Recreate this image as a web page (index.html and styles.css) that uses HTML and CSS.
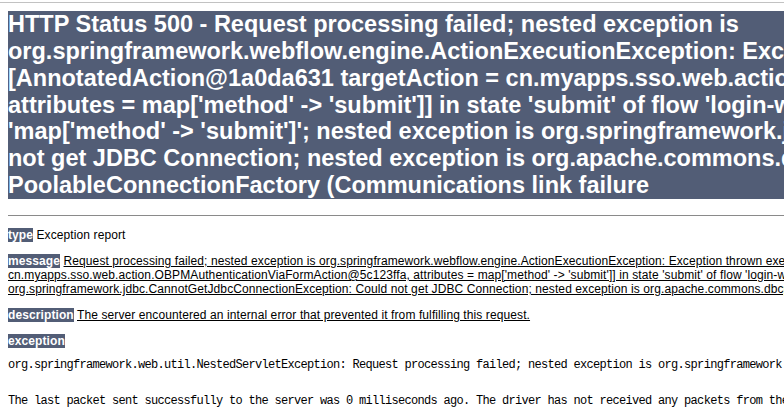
FILE: index.html
```html
<!DOCTYPE html>
<html>
<head>
<meta charset="utf-8">
<title>Apache Tomcat - Error report</title>
<link rel="stylesheet" href="styles.css">
</head>
<body>
<div class="chrome"></div>
<div class="page">
<h1 class="title">HTTP Status 500 - Request processing failed; nested exception is<br>org.springframework.webflow.engine.ActionExecutionException: Exception thrown executing<br>[AnnotatedAction@1a0da631 targetAction = cn.myapps.sso.web.action.OBPMAuthenticationViaFormAction@5c123ffa,<br>attributes = map['method' -&gt; 'submit']] in state 'submit' of flow 'login-webflow' -- action execution attributes were<br>'map['method' -&gt; 'submit']'; nested exception is org.springframework.jdbc.CannotGetJdbcConnectionException: Could<br>not get JDBC Connection; nested exception is org.apache.commons.dbcp.SQLNestedException: Cannot create<br>PoolableConnectionFactory (Communications link failure</h1>
<hr class="rule">
<p class="row"><b class="label">type</b> Exception report</p>
<p class="row"><b class="label">message</b> <u>Request processing failed; nested exception is org.springframework.webflow.engine.ActionExecutionException: Exception thrown executing [AnnotatedAction@1a0da631 targetAction =<br>cn.myapps.sso.web.action.OBPMAuthenticationViaFormAction@5c123ffa, attributes = map['method' -&gt; 'submit']] in state 'submit' of flow 'login-webflow' -- action execution attributes were 'map['method' -&gt; 'submit']'; nested exception is<br>org.springframework.jdbc.CannotGetJdbcConnectionException: Could not get JDBC Connection; nested exception is org.apache.commons.dbcp.SQLNestedException: Cannot create PoolableConnectionFactory (Communications link failure</u></p>
<p class="row"><b class="label">description</b> <u>The server encountered an internal error that prevented it from fulfilling this request.</u></p>
<p class="row row-tight"><b class="label">exception</b></p>
<pre class="trace">org.springframework.web.util.NestedServletException: Request processing failed; nested exception is org.springframework.webflow.engine.ActionExecutionException: Exception thrown executing

The last packet sent successfully to the server was 0 milliseconds ago. The driver has not received any packets from the server.)
        org.springframework.web.servlet.FrameworkServlet.processRequest(FrameworkServlet.java:500)</pre>
</div>
</body>
</html>
```

FILE: styles.css
```css
html, body {
  margin: 0;
  padding: 0;
  background: #ffffff;
  overflow: hidden;
}

.chrome {
  margin-top: 2px;
  height: 1px;
  background: #c2c2c2;
}

.page {
  width: 1500px;
  padding: 0 8px;
}

.title {
  margin: 8px 0 0;
  padding: 0;
  background: #525D76;
  color: #ffffff;
  font-family: "Liberation Sans", Arial, sans-serif;
  font-weight: bold;
  font-size: 23.5px;
  line-height: 26.86px;
  white-space: nowrap;
}

.rule {
  border: 0;
  height: 1px;
  background: #8a8a8a;
  margin: 16px 0 12px;
}

.row {
  margin: 0 0 12px;
  font-family: "Liberation Sans", Arial, sans-serif;
  font-size: 12px;
  letter-spacing: 0.1px;
  line-height: 14px;
  color: #000000;
  white-space: nowrap;
}

.row-tight {
  margin-bottom: 8px;
}

.label {
  background: #525D76;
  color: #ffffff;
  font-weight: bold;
}

.trace {
  margin: 0;
  font-family: "Liberation Mono", "Courier New", monospace;
  font-size: 12px;
  letter-spacing: -0.7px;
  line-height: 18px;
  color: #000000;
}
```
